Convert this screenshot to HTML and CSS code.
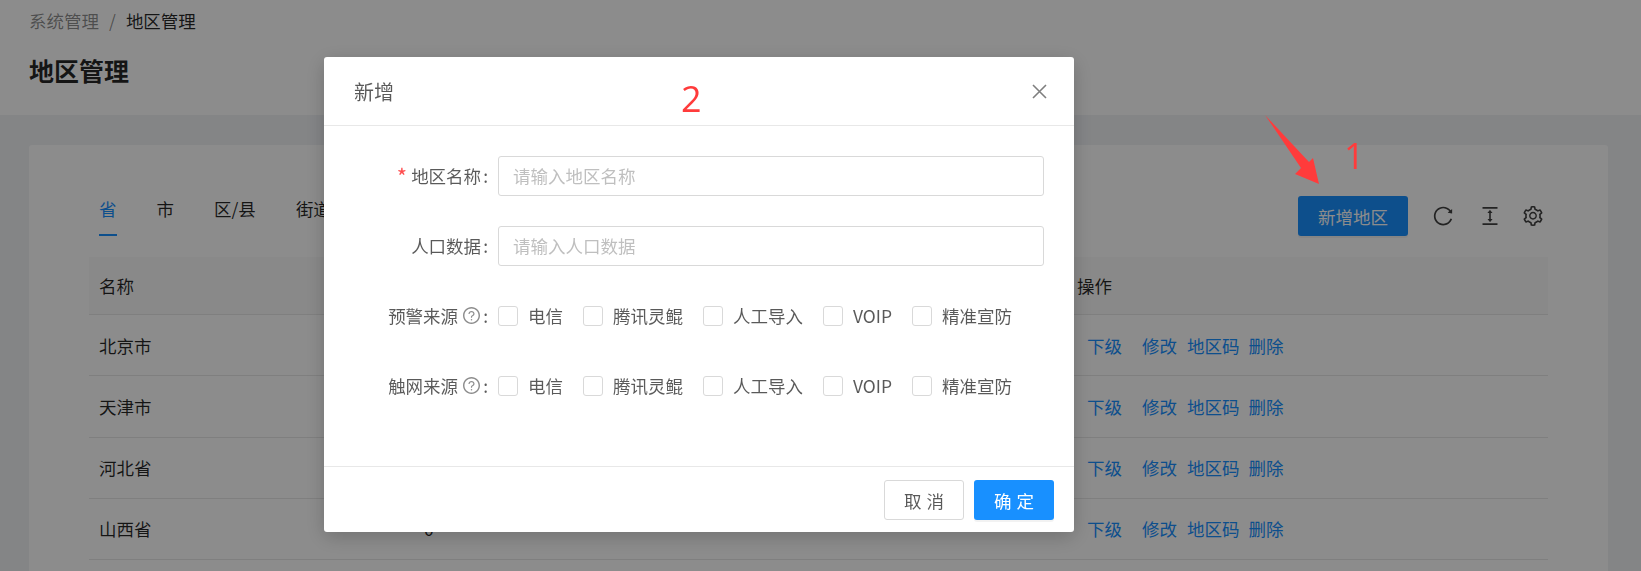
FILE: index.html
```html
<!DOCTYPE html>
<html lang="zh-CN">

<head>
    <meta charset="UTF-8">
    <title>地区管理</title>
    <link rel="stylesheet" href="styles.css">
</head>

<body>

    <div class="page-header">
        <div class="breadcrumb">
            <span>系统管理</span>
            <span class="breadcrumb-sep">/</span>
            <span class="breadcrumb-last">地区管理</span>
        </div>
        <h1 class="page-title">地区管理</h1>
    </div>

    <div class="content">
        <div class="card">
            <div class="toolbar">
                <div class="tabs">
                    <span class="tab tab-active">省</span>
                    <span class="tab">市</span>
                    <span class="tab">区/县</span>
                    <span class="tab">街道</span>
                </div>
                <div class="actions">
                    <button class="btn btn-primary btn-add">新增地区</button>
                    <svg class="tool-icon tool-reload" viewBox="64 64 896 896"><path d="M909.1 209.3l-56.4 44.1C775.8 155.1 656.2 92 521.9 92 290 92 102.3 279.5 102 511.5 101.7 743.7 289.8 932 521.9 932c181.3 0 335.8-115 394.6-276.1 1.5-4.2-.7-8.9-4.9-10.3l-56.7-19.5a8 8 0 0 0-10.1 4.8c-1.8 5-3.8 10-5.9 14.9-17.3 41-42.1 77.8-73.7 109.4A344.77 344.77 0 0 1 655.9 829c-42.3 17.9-87.4 27-133.8 27-46.5 0-91.5-9.1-133.8-27A341.5 341.5 0 0 1 279 755.2a342.16 342.16 0 0 1-73.7-109.4c-17.9-42.4-27-87.4-27-133.9s9.1-91.5 27-133.9c17.3-41 42.1-77.8 73.7-109.4 31.6-31.6 68.4-56.4 109.3-73.8 42.3-17.9 87.4-27 133.8-27 46.5 0 91.5 9.1 133.8 27a341.5 341.5 0 0 1 109.3 73.8c9.9 9.9 19.2 20.4 27.8 31.4l-60.2 47a8 8 0 0 0 3 14.1l175.6 43c5 1.2 9.9-2.6 9.9-7.7l.8-180.9c-.1-6.6-7.8-10.3-13-6.2z"/></svg>
                    <svg class="tool-icon" viewBox="64 64 896 896"><path d="M840 836H184c-4.4 0-8 3.6-8 8v60c0 4.4 3.6 8 8 8h656c4.4 0 8-3.6 8-8v-60c0-4.4-3.6-8-8-8zm0-724H184c-4.4 0-8 3.6-8 8v60c0 4.4 3.6 8 8 8h656c4.4 0 8-3.6 8-8v-60c0-4.4-3.6-8-8-8zM610.8 378c6 0 9.4-7 5.7-11.7L515.7 238.7a7.14 7.14 0 0 0-11.3 0L403.6 366.3a7.23 7.23 0 0 0 5.7 11.7H476v268h-62.8c-6 0-9.4 7-5.7 11.7l100.8 127.5c2.9 3.7 8.5 3.7 11.3 0l100.8-127.5c3.7-4.7.4-11.7-5.7-11.7H548V378h62.8z"/></svg>
                    <svg class="tool-icon" viewBox="64 64 896 896"><path d="M924.8 625.7l-65.5-56c3.1-19 4.7-38.4 4.7-57.8s-1.6-38.8-4.7-57.8l65.5-56a32.03 32.03 0 0 0 9.3-35.2l-.9-2.6a443.74 443.74 0 0 0-79.7-137.9l-1.8-2.1a32.12 32.12 0 0 0-35.1-9.5l-81.3 28.9c-30-24.6-63.5-44-99.7-57.6l-15.7-85a32.05 32.05 0 0 0-25.8-25.7l-2.7-.5c-52.1-9.4-106.9-9.4-159 0l-2.7.5a32.05 32.05 0 0 0-25.8 25.7l-15.8 85.4a351.86 351.86 0 0 0-99 57.4l-81.9-29.1a32 32 0 0 0-35.1 9.5l-1.8 2.1a446.02 446.02 0 0 0-79.7 137.9l-.9 2.6c-4.5 12.5-.8 26.5 9.3 35.2l66.3 56.6c-3.1 18.8-4.6 38-4.6 57.1 0 19.2 1.5 38.4 4.6 57.1L99 625.5a32.03 32.03 0 0 0-9.3 35.2l.9 2.6c18.1 50.4 44.9 96.9 79.7 137.9l1.8 2.1a32.12 32.12 0 0 0 35.1 9.5l81.9-29.1c29.8 24.5 63.1 43.9 99 57.4l15.8 85.4a32.05 32.05 0 0 0 25.8 25.7l2.7.5a449.4 449.4 0 0 0 159 0l2.7-.5a32.05 32.05 0 0 0 25.8-25.7l15.7-85a350 350 0 0 0 99.7-57.6l81.3 28.9a32 32 0 0 0 35.1-9.5l1.8-2.1c34.8-41.1 61.6-87.5 79.7-137.9l.9-2.6c4.5-12.3.8-26.3-9.3-35zM788.3 465.9c2.5 15.1 3.8 30.6 3.8 46.1s-1.3 31-3.8 46.1l-6.6 40.1 74.7 63.9a370.03 370.03 0 0 1-42.6 73.6L721 702.8l-31.4 25.8c-23.9 19.6-50.5 35-79.3 45.8l-38.1 14.3-17.9 97a377.5 377.5 0 0 1-85 0l-17.9-97.2-37.8-14.5c-28.5-10.8-55-26.2-78.7-45.7l-31.4-25.9-93.4 33.2c-17-22.9-31.2-47.6-42.6-73.6l75.5-64.5-6.5-40c-2.4-14.9-3.7-30.3-3.7-45.5 0-15.3 1.2-30.6 3.7-45.5l6.5-40-75.5-64.5c11.3-26.1 25.6-50.7 42.6-73.6l93.4 33.2 31.4-25.9c23.7-19.5 50.2-34.9 78.7-45.7l37.9-14.3 17.9-97.2c28.1-3.2 56.8-3.2 85 0l17.9 97 38.1 14.3c28.7 10.8 55.4 26.2 79.3 45.8l31.4 25.8 92.8-32.9c17 22.9 31.2 47.6 42.6 73.6L781.8 426l6.5 39.9zM512 326c-97.2 0-176 78.8-176 176s78.8 176 176 176 176-78.8 176-176-78.8-176-176-176zm79.2 255.2A111.6 111.6 0 0 1 512 614c-29.9 0-58-11.7-79.2-32.8A111.6 111.6 0 0 1 400 502c0-29.9 11.7-58 32.8-79.2C454 401.6 482.1 390 512 390c29.9 0 58 11.6 79.2 32.8A111.6 111.6 0 0 1 624 502c0 29.9-11.7 58-32.8 79.2z"/></svg>
                </div>
            </div>

            <div class="table">
                <div class="row row-head">
                    <div class="col-name">名称</div>
                    <div class="col-count"></div>
                    <div class="col-ops">操作</div>
                </div>
                <div class="row">
                    <div class="col-name">北京市</div>
                    <div class="col-count"></div>
                    <div class="col-ops"><div class="links"><a class="link-down">下级</a><a class="link-edit">修改</a><a class="link-code">地区码</a><a>删除</a></div></div>
                </div>
                <div class="row">
                    <div class="col-name">天津市</div>
                    <div class="col-count"></div>
                    <div class="col-ops"><div class="links"><a class="link-down">下级</a><a class="link-edit">修改</a><a class="link-code">地区码</a><a>删除</a></div></div>
                </div>
                <div class="row">
                    <div class="col-name">河北省</div>
                    <div class="col-count"></div>
                    <div class="col-ops"><div class="links"><a class="link-down">下级</a><a class="link-edit">修改</a><a class="link-code">地区码</a><a>删除</a></div></div>
                </div>
                <div class="row">
                    <div class="col-name">山西省</div>
                    <div class="col-count">0</div>
                    <div class="col-ops"><div class="links"><a class="link-down">下级</a><a class="link-edit">修改</a><a class="link-code">地区码</a><a>删除</a></div></div>
                </div>
            </div>
        </div>
    </div>

    <div class="mask"></div>

    <div class="modal">
        <div class="modal-header">
            <span class="modal-title">新增</span>
            <svg class="modal-close" viewBox="0 0 15 15"><path d="M1 1L14 14M14 1L1 14"/></svg>
        </div>
        <div class="modal-body">
            <div class="form-row">
                <label class="form-label"><span class="required">*</span>地区名称<span class="colon">:</span></label>
                <input class="form-input" type="text" placeholder="请输入地区名称">
            </div>
            <div class="form-row">
                <label class="form-label">人口数据<span class="colon">:</span></label>
                <input class="form-input" type="text" placeholder="请输入人口数据">
            </div>
            <div class="form-row">
                <label class="form-label">预警来源
                    <svg class="help-icon" viewBox="64 64 896 896"><path d="M512 64C264.6 64 64 264.6 64 512s200.6 448 448 448 448-200.6 448-448S759.4 64 512 64zm0 820c-205.4 0-372-166.6-372-372s166.6-372 372-372 372 166.6 372 372-166.6 372-372 372z"/><path d="M623.6 316.7C593.6 290.4 554 276 512 276s-81.6 14.5-111.6 40.7C369.2 344 352 380.7 352 420v7.6c0 4.4 3.6 8 8 8h48c4.4 0 8-3.6 8-8V420c0-44.1 43.1-80 96-80s96 35.9 96 80c0 31.1-22 59.6-56.1 72.7-21.2 8.1-39.2 22.3-52.1 40.9-13.1 19-19.9 41.8-19.9 64.9V620c0 4.4 3.6 8 8 8h48c4.4 0 8-3.6 8-8v-22.7a48.3 48.3 0 0 1 30.9-44.8c59-22.7 97.1-74.7 97.1-132.5.1-39.3-17.1-76-48.3-103.3zM472 732a40 40 0 1 0 80 0 40 40 0 1 0-80 0z"/></svg>:</label>
                <div class="check-group">
                    <span class="check-item"><i class="check-box"></i>电信</span>
                    <span class="check-item"><i class="check-box"></i>腾讯灵鲲</span>
                    <span class="check-item"><i class="check-box"></i>人工导入</span>
                    <span class="check-item"><i class="check-box"></i>VOIP</span>
                    <span class="check-item"><i class="check-box"></i>精准宣防</span>
                </div>
            </div>
            <div class="form-row">
                <label class="form-label">触网来源
                    <svg class="help-icon" viewBox="64 64 896 896"><path d="M512 64C264.6 64 64 264.6 64 512s200.6 448 448 448 448-200.6 448-448S759.4 64 512 64zm0 820c-205.4 0-372-166.6-372-372s166.6-372 372-372 372 166.6 372 372-166.6 372-372 372z"/><path d="M623.6 316.7C593.6 290.4 554 276 512 276s-81.6 14.5-111.6 40.7C369.2 344 352 380.7 352 420v7.6c0 4.4 3.6 8 8 8h48c4.4 0 8-3.6 8-8V420c0-44.1 43.1-80 96-80s96 35.9 96 80c0 31.1-22 59.6-56.1 72.7-21.2 8.1-39.2 22.3-52.1 40.9-13.1 19-19.9 41.8-19.9 64.9V620c0 4.4 3.6 8 8 8h48c4.4 0 8-3.6 8-8v-22.7a48.3 48.3 0 0 1 30.9-44.8c59-22.7 97.1-74.7 97.1-132.5.1-39.3-17.1-76-48.3-103.3zM472 732a40 40 0 1 0 80 0 40 40 0 1 0-80 0z"/></svg>:</label>
                <div class="check-group">
                    <span class="check-item"><i class="check-box"></i>电信</span>
                    <span class="check-item"><i class="check-box"></i>腾讯灵鲲</span>
                    <span class="check-item"><i class="check-box"></i>人工导入</span>
                    <span class="check-item"><i class="check-box"></i>VOIP</span>
                    <span class="check-item"><i class="check-box"></i>精准宣防</span>
                </div>
            </div>
        </div>
        <div class="modal-footer">
            <button class="btn btn-default">取消</button>
            <button class="btn btn-primary">确定</button>
        </div>
    </div>

    <!-- red marks drawn on top of the screenshot -->
    <span class="mark mark-one">1</span>
    <span class="mark mark-two">2</span>
    <svg class="mark-arrow" viewBox="0 0 60 72"><polygon points="0,0 44,47 48,43 54,69 30,59 36,53"/></svg>

</body>

</html>
```

FILE: styles.css
```css
* {
    box-sizing: border-box;
}

html,
body {
    height: 571px;
}

body {
    margin: 0;
    overflow: hidden;
    display: flex;
    flex-direction: column;
    background-color: #f0f2f5;
    font-family: "Noto Sans CJK SC", "Noto Sans", sans-serif;
    font-size: 17.5px;
    color: rgba(0, 0, 0, 0.85);
}

.page-header {
    height: 115px;
    padding: 7px 29px 0;
    background-color: #fff;
}

.breadcrumb {
    display: flex;
    line-height: 28px;
    color: rgba(0, 0, 0, 0.45);
}

.breadcrumb-sep {
    margin: 0 10px;
}

.breadcrumb-last {
    color: rgba(0, 0, 0, 0.85);
}

.page-title {
    margin: 15px 0 0;
    font-size: 25px;
    line-height: 40px;
    font-weight: 700;
}

.content {
    flex: 1;
    padding: 30px 33px 0 29px;
    overflow: hidden;
}

.card {
    height: 100%;
    padding: 51px 60px 0;
    background-color: #fff;
    border-radius: 3px 3px 0 0;
}

.toolbar {
    display: flex;
    justify-content: space-between;
    height: 40px;
    margin-bottom: 21px;
}

.tabs {
    display: flex;
    gap: 40px;
    padding-left: 10px;
}

.tab {
    height: 40px;
    line-height: 26px;
    white-space: nowrap;
}

.tab-active {
    color: #1890ff;
    border-bottom: 2.5px solid #1890ff;
}

.actions {
    display: flex;
    align-items: center;
    gap: 23px;
    padding-right: 5px;
}

.btn-add {
    width: 110px;
    margin-right: 2px;
}

.tool-icon {
    width: 20px;
    height: 20px;
    fill: rgba(0, 0, 0, 0.75);
}

.tool-reload {
    margin-right: 4px;
}

.btn {
    height: 40px;
    font-family: inherit;
    font-size: 17.5px;
    border-radius: 3px;
    border: 1px solid transparent;
    padding: 0;
}

.btn-primary {
    background-color: #1890ff;
    color: #fff;
    box-shadow: 0 2px 0 rgba(0, 0, 0, 0.05);
}

.btn-default {
    background-color: #fff;
    border-color: #d9d9d9;
    color: rgba(0, 0, 0, 0.65);
}

.row {
    display: flex;
    align-items: center;
    height: 61.25px;
    border-bottom: 1px solid #e8e8e8;
}

.row-head {
    height: 58px;
    background-color: #fafafa;
}

.col-name {
    width: 335px;
    padding-left: 10px;
}

.col-count {
    flex: 1;
}

.col-ops {
    width: 481px;
    padding-left: 10px;
}

.links {
    display: flex;
    padding-left: 10px;
    color: #1890ff;
}

.link-down {
    margin-right: 20px;
}

.link-edit {
    margin-right: 10px;
}

.link-code {
    margin-right: 9px;
}

.mask {
    position: fixed;
    top: 0;
    left: 0;
    right: 0;
    bottom: 0;
    background-color: rgba(0, 0, 0, 0.45);
}

.modal {
    position: fixed;
    top: 57px;
    left: 324px;
    width: 750px;
    height: 475px;
    display: flex;
    flex-direction: column;
    background-color: #fff;
    border-radius: 3px;
    box-shadow: 0 5px 20px rgba(0, 0, 0, 0.2);
    color: rgba(0, 0, 0, 0.65);
}

.modal-header {
    display: flex;
    align-items: center;
    justify-content: space-between;
    height: 69px;
    padding: 0 27px 0 30px;
    border-bottom: 1px solid #e8e8e8;
}

.modal-title {
    font-size: 20px;
}

.modal-close {
    width: 15px;
    height: 15px;
    fill: none;
    stroke: rgba(0, 0, 0, 0.5);
    stroke-width: 1.6;
}

.modal-body {
    flex: 1;
    padding-top: 30px;
}

.form-row {
    display: flex;
    align-items: center;
    height: 40px;
    margin-bottom: 30px;
}

.form-label {
    display: flex;
    align-items: center;
    justify-content: flex-end;
    width: 164px;
    margin-right: 10px;
    padding-bottom: 2px;
    white-space: nowrap;
}

.colon {
    margin-left: 2px;
}

.required {
    margin-right: 4px;
    font-size: 22px;
    line-height: 22px;
    color: #ff4d4f;
}

.form-input {
    width: 546px;
    height: 40px;
    padding: 0 14px 2px;
    font-family: inherit;
    font-size: 17.5px;
    border: 1px solid #d9d9d9;
    border-radius: 3px;
    outline: none;
}

.form-input::placeholder {
    color: #bfbfbf;
}

.help-icon {
    width: 17px;
    height: 17px;
    margin: 0 3px 0 5px;
    fill: rgba(0, 0, 0, 0.45);
}

.check-group {
    display: flex;
}

.check-item {
    display: flex;
    align-items: center;
    margin-right: 20px;
    padding-bottom: 2px;
}

.check-box {
    width: 20px;
    height: 20px;
    margin-top: 2px;
    margin-right: 10px;
    background-color: #fff;
    border: 1px solid #d9d9d9;
    border-radius: 3px;
}

.modal-footer {
    display: flex;
    justify-content: flex-end;
    gap: 10px;
    height: 66px;
    padding: 13px 20px 0 0;
    border-top: 1px solid #e8e8e8;
}

.modal-footer .btn {
    width: 80px;
    letter-spacing: 0.3em;
    text-indent: 0.3em;
}

.mark {
    position: fixed;
    font-family: "Open Sans", sans-serif;
    font-size: 36px;
    line-height: 40px;
    color: #ff3b3b;
}

.mark-one {
    top: 136px;
    left: 1344px;
}

.mark-two {
    top: 79px;
    left: 681px;
}

.mark-arrow {
    position: fixed;
    top: 115px;
    left: 1265px;
    width: 60px;
    height: 72px;
    fill: #ff3b3b;
}
```
